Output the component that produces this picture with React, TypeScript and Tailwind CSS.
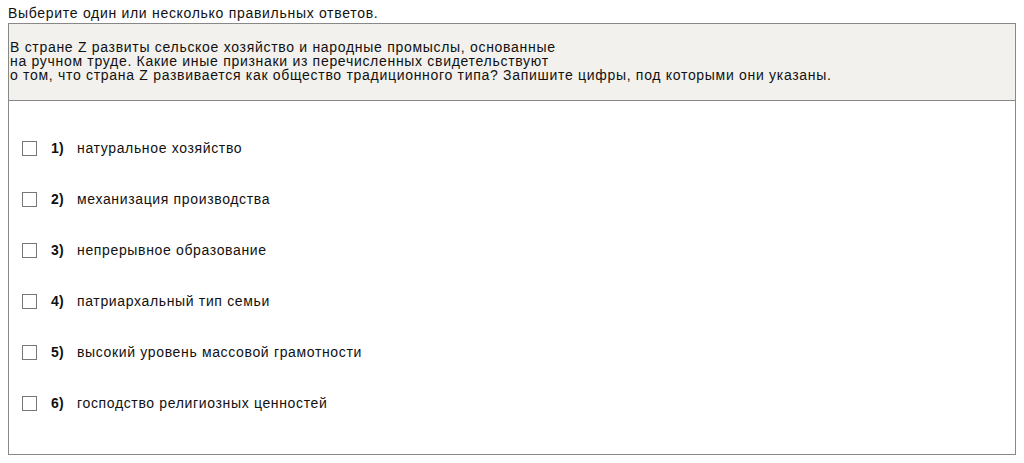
import React from "react";

const options = [
  "натуральное хозяйство",
  "механизация производства",
  "непрерывное образование",
  "патриархальный тип семьи",
  "высокий уровень массовой грамотности",
  "господство религиозных ценностей",
];

export default function App() {
  return (
    <div
      className="w-[1024px] h-[463px] bg-white text-[#111] text-[14px] leading-[15px] tracking-[0.7px] px-2 pt-[6px]"
      style={{ fontFamily: '"Liberation Sans", Arial, sans-serif' }}
    >
      <div className="h-[17px]">Выберите один или несколько правильных ответов.</div>
      <div className="border border-[#888] w-[1008px] h-[432px] flex flex-col">
        <div className="bg-[#f3f1ed] border-b border-[#888] h-[77px] px-[1px] pt-[16px] leading-[14px]">
          В стране Z развиты сельское хозяйство и народные промыслы, основанные
          <br />
          на ручном труде. Какие иные признаки из перечисленных свидетельствуют
          <br />о том, что страна Z развивается как общество традиционного типа? Запишите цифры, под которыми они указаны.
        </div>
        <div className="flex flex-col pt-[22px] pl-[13px]">
          {options.map((t, i) => (
            <div key={i} className="flex items-center h-[51px]">
              <span className="w-[15px] h-[15px] border border-[#777] bg-white shrink-0" />
              <span className="font-bold ml-[14px] w-[26px] tracking-[0.3px]">{i + 1})</span>
              <span className="tracking-[0.65px]">{t}</span>
            </div>
          ))}
        </div>
      </div>
    </div>
  );
}
